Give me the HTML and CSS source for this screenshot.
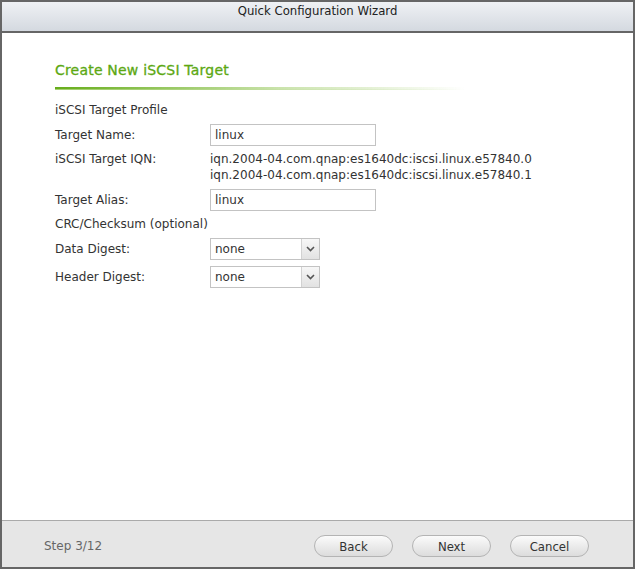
FILE: index.html
```html
<!DOCTYPE html>
<html lang="en">
<head>
    <meta charset="UTF-8">
    <title>Quick Configuration Wizard</title>
    <link rel="stylesheet" href="styles.css">
</head>
<body>
    <div class="wizard">
        <div class="wizard-header">Quick Configuration Wizard</div>
        <div class="wizard-body">
            <h2 class="section-title">Create New iSCSI Target</h2>
            <div class="section-line"></div>
            <div class="group-title">iSCSI Target Profile</div>
            <div class="row row-name">
                <label>Target Name:</label>
                <input type="text" class="text-input" value="linux">
            </div>
            <div class="row row-text">
                <label>iSCSI Target IQN:</label>
                <div class="iqn">
                    <div>iqn.2004-04.com.qnap:es1640dc:iscsi.linux.e57840.0</div>
                    <div>iqn.2004-04.com.qnap:es1640dc:iscsi.linux.e57840.1</div>
                </div>
            </div>
            <div class="row row-alias">
                <label>Target Alias:</label>
                <input type="text" class="text-input" value="linux">
            </div>
            <div class="group-title">CRC/Checksum (optional)</div>
            <div class="row">
                <label>Data Digest:</label>
                <div class="combo">
                    <span class="combo-value">none</span>
                    <span class="combo-btn">
                        <svg width="9" height="6" viewBox="0 0 9 6"><path d="M1 1 L4.5 4.5 L8 1" fill="none" stroke="#555" stroke-width="1.6"/></svg>
                    </span>
                </div>
            </div>
            <div class="row">
                <label>Header Digest:</label>
                <div class="combo">
                    <span class="combo-value">none</span>
                    <span class="combo-btn">
                        <svg width="9" height="6" viewBox="0 0 9 6"><path d="M1 1 L4.5 4.5 L8 1" fill="none" stroke="#555" stroke-width="1.6"/></svg>
                    </span>
                </div>
            </div>
        </div>
        <div class="wizard-footer">
            <span class="step">Step 3/12</span>
            <div class="buttons">
                <button>Back</button>
                <button>Next</button>
                <button>Cancel</button>
            </div>
        </div>
    </div>
</body>
</html>
```

FILE: styles.css
```css
html, body {
    margin: 0;
    padding: 0;
}
body {
    font-family: "DejaVu Sans", sans-serif;
    font-size: 12px;
    color: #333;
    background-color: #fff;
}
.wizard {
    width: 635px;
    height: 569px;
    box-sizing: border-box;
    border: 2px solid #666;
    display: flex;
    flex-direction: column;
}
.wizard-header {
    height: 31px;
    box-sizing: border-box;
    border-bottom: 2px solid #666;
    background: linear-gradient(#eff1f4, #d4d9e0);
    text-align: center;
    font-family: "DejaVu Sans Condensed", "DejaVu Sans", sans-serif;
    font-size: 13px;
    line-height: 17px;
    color: #222;
}
.wizard-body {
    flex: 1;
    background-color: #fff;
    padding: 28px 0 0 53px;
}
.section-title {
    margin: 0;
    font-size: 14px;
    font-weight: normal;
    letter-spacing: 0.2px;
    color: #5ca812;
    -webkit-text-stroke: 0.3px #5ca812;
    line-height: 18px;
}
.section-line {
    width: 410px;
    height: 2px;
    margin-top: 8px;
    border-bottom: 1px solid transparent;
    background: linear-gradient(to right, #66ad1a, rgba(150, 200, 90, 0.5) 55%, rgba(255, 255, 255, 0));
    border-image: linear-gradient(to right, #a7d074, rgba(200, 225, 170, 0.5) 60%, rgba(255, 255, 255, 0)) 1;
    margin-bottom: 12px;
}
.group-title {
    line-height: 16px;
    margin-bottom: 6px;
}
.row {
    display: flex;
    align-items: center;
    margin-bottom: 6px;
}
.row-name {
    margin-bottom: 5px;
}
.row-alias {
    margin-bottom: 5px;
}
.row label {
    width: 155px;
    flex-shrink: 0;
    line-height: 16px;
}
.row-text {
    align-items: flex-start;
}
.iqn {
    line-height: 16px;
}
.text-input {
    width: 166px;
    height: 22px;
    box-sizing: border-box;
    border: 1px solid #c3c3c3;
    padding: 0 4px;
    font-family: inherit;
    font-size: 12px;
    color: #333;
    margin: 0;
}
.combo {
    width: 110px;
    height: 22px;
    box-sizing: border-box;
    border: 1px solid #c3c3c3;
    display: flex;
}
.combo-value {
    flex: 1;
    padding-left: 4px;
    line-height: 20px;
}
.combo-btn {
    width: 17px;
    border-left: 1px solid #d2d2d2;
    background: linear-gradient(#f7f7f7, #e2e2e2);
    display: flex;
    align-items: center;
    justify-content: center;
}
.wizard-footer {
    height: 46px;
    border-top: 1px solid #aaa;
    background-color: #e6e6e6;
    display: flex;
    align-items: center;
    padding: 0 44px 0 42px;
}
.step {
    color: #666;
    flex: 1;
    margin-top: 4px;
}
.buttons {
    display: flex;
    gap: 19px;
    margin-top: 4px;
}
button {
    width: 79px;
    height: 22px;
    border: 1px solid #b4b4b4;
    border-radius: 11px;
    background: linear-gradient(#fbfbfb, #dcdcdc);
    font-family: "DejaVu Sans Condensed", "DejaVu Sans", sans-serif;
    font-size: 13px;
    color: #333;
    padding: 0;
}
```
